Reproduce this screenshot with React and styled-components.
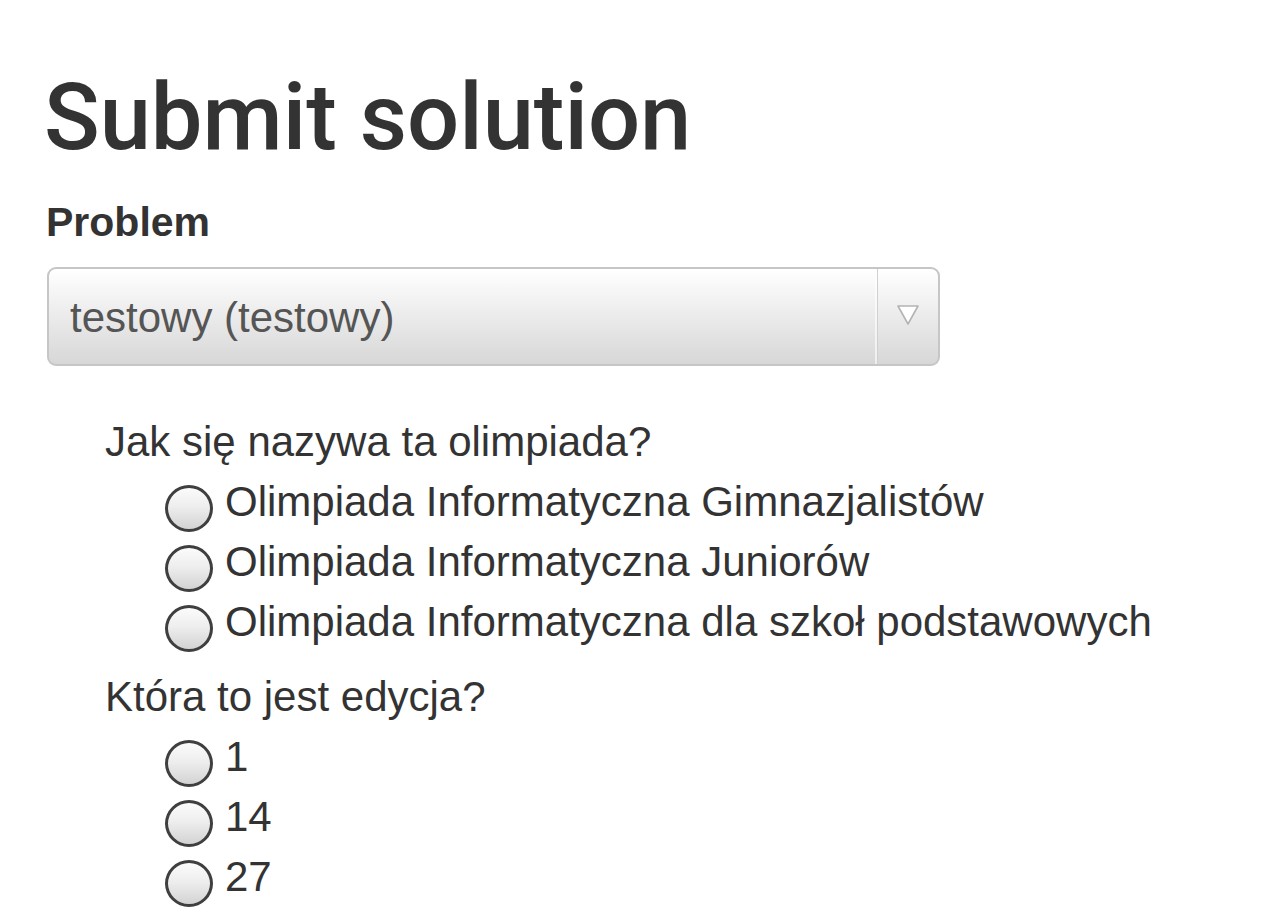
import React from "react";
import styled, { createGlobalStyle } from "styled-components";

const Global = createGlobalStyle`
  html, body { margin: 0; padding: 0; background: #fff; }
  body {
    font-family: "Liberation Sans", Arial, Helvetica, sans-serif;
    color: #333;
  }
`;

const Page = styled.main`
  padding: 67px 0 0 46px;
  display: flex;
  flex-direction: column;
  align-items: flex-start;
`;

const Title = styled.h1`
  margin: 0 0 0 -2px;
  font-family: Roboto, "Liberation Sans", sans-serif;
  font-weight: 500;
  font-size: 92px;
  line-height: 101px;
  color: #333;
`;

const Label = styled.label`
  margin: 30px 0 0 0;
  font-weight: 700;
  font-size: 41px;
  line-height: 49px;
  color: #333;
`;

const SelectBox = styled.div`
  margin: 20px 0 0 1px;
  width: 893px;
  height: 99px;
  box-sizing: border-box;
  display: flex;
  align-items: stretch;
  border: 2px solid #c6c6c6;
  border-radius: 9px;
  background: linear-gradient(#ffffff 0%, #f1f1f1 35%, #d7d7d7 100%);
  overflow: hidden;
`;

const SelectValue = styled.div`
  flex: 1;
  display: flex;
  align-items: center;
  padding: 2px 0 0 21px;
  font-size: 42px;
  color: #555;
  border-right: 1px solid #d0d0d0;
  box-shadow: inset -2px 0 0 rgba(255, 255, 255, 0.6);
`;

const ArrowZone = styled.div`
  width: 60px;
  display: flex;
  align-items: center;
  justify-content: center;
  padding-bottom: 4px;
`;

const Form = styled.div`
  margin: 46px 0 0 59px;
  display: flex;
  flex-direction: column;
  gap: 15px;
`;

const Group = styled.fieldset`
  margin: 0;
  padding: 0;
  border: 0;
  display: flex;
  flex-direction: column;
`;

const Question = styled.legend`
  padding: 0;
  font-size: 42px;
  line-height: 60px;
  color: #333;
`;

const Option = styled.label`
  display: flex;
  align-items: flex-start;
  margin-left: 60px;
  font-size: 42px;
  line-height: 60px;
  color: #333;
`;

const Radio = styled.input.attrs({ type: "radio" })`
  appearance: none;
  -webkit-appearance: none;
  margin: 13px 12px 0 0;
  width: 48px;
  height: 47px;
  box-sizing: border-box;
  border: 3px solid #3f3f3f;
  border-radius: 50%;
  background: linear-gradient(#fbfbfb 0%, #eeeeee 45%, #d3d3d3 100%);
  flex: none;
`;

const Arrow = () => (
  <svg width="24" height="22" viewBox="0 0 24 22">
    <polygon
      points="2,2 22,2 12,20"
      fill="#ffffff"
      stroke="#b4b4b4"
      strokeWidth="1.6"
      strokeLinejoin="round"
    />
  </svg>
);

const questions = [
  {
    name: "olimpiada",
    text: "Jak się nazywa ta olimpiada?",
    options: [
      "Olimpiada Informatyczna Gimnazjalistów",
      "Olimpiada Informatyczna Juniorów",
      "Olimpiada Informatyczna dla szkoł podstawowych",
    ],
  },
  {
    name: "edycja",
    text: "Która to jest edycja?",
    options: ["1", "14", "27"],
  },
];

export default function App() {
  return (
    <>
      <Global />
      <Page>
        <Title>Submit solution</Title>
        <Label>Problem</Label>
        <SelectBox role="combobox" aria-label="Problem">
          <SelectValue>testowy (testowy)</SelectValue>
          <ArrowZone>
            <Arrow />
          </ArrowZone>
        </SelectBox>
        <Form>
          {questions.map((q) => (
            <Group key={q.name}>
              <Question>{q.text}</Question>
              {q.options.map((o) => (
                <Option key={o}>
                  <Radio name={q.name} value={o} />
                  {o}
                </Option>
              ))}
            </Group>
          ))}
        </Form>
      </Page>
    </>
  );
}
